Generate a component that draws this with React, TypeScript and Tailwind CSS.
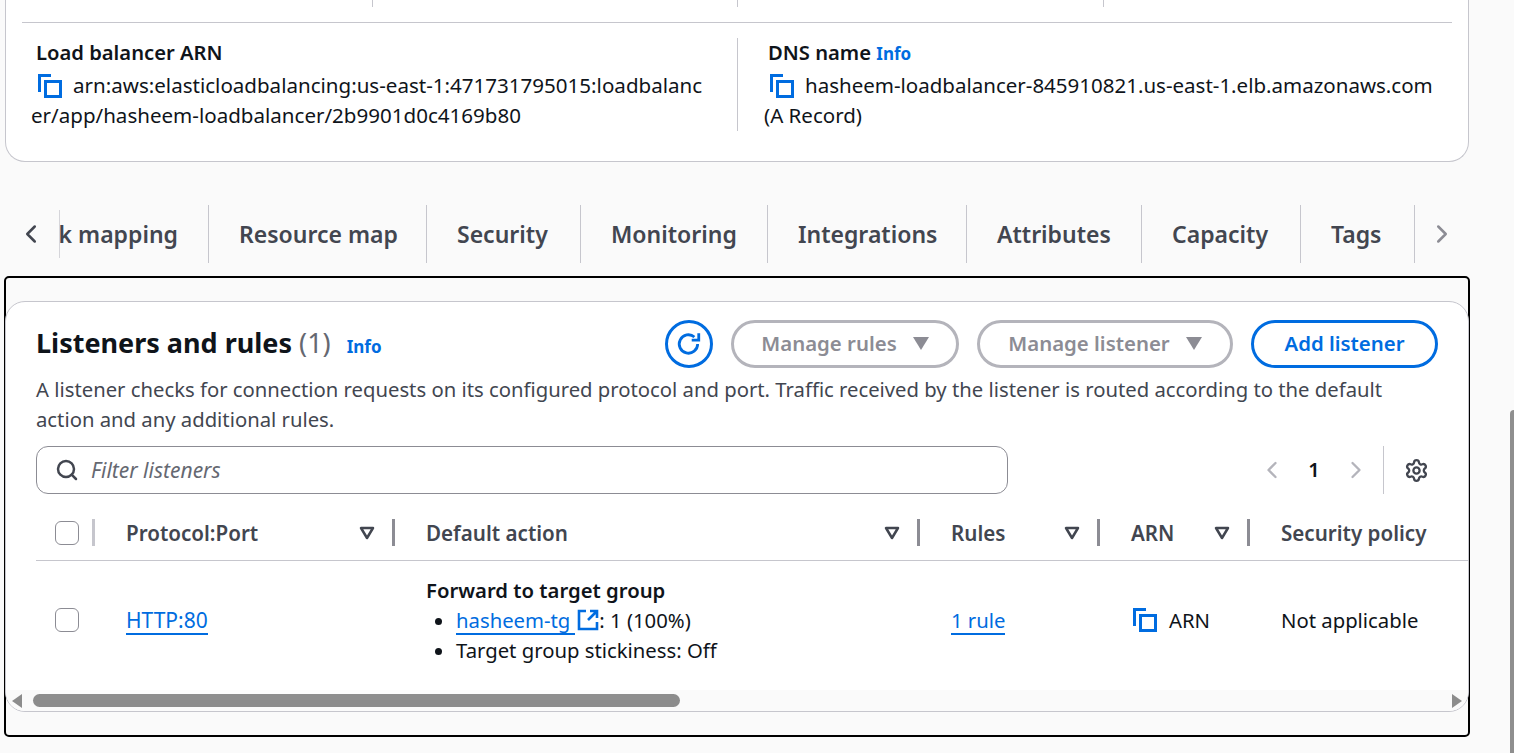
import { ChevronLeft, ChevronRight, Search, Settings } from 'lucide-react';

function CopyIcon() {
  return (
    <svg width="24" height="24" viewBox="0 0 24 24" fill="none" className="shrink-0">
      <path d="M13 1.5H1.5V18" stroke="#006ce0" strokeWidth="3" />
      <rect x="7.5" y="7.5" width="15" height="15" stroke="#006ce0" strokeWidth="3" />
    </svg>
  );
}

function SortIcon() {
  return (
    <svg width="16" height="14" viewBox="0 0 16 14" fill="none">
      <path d="M2 2h12l-6 10z" stroke="#424650" strokeWidth="2.5" strokeLinejoin="round" />
    </svg>
  );
}

function Caret({ fill }: { fill: string }) {
  return (
    <svg width="16" height="13" viewBox="0 0 16 13">
      <path d="M0 0h16l-8 13z" fill={fill} />
    </svg>
  );
}

const tabs = [
  { label: 'Resource map', w: 'w-[218px]' },
  { label: 'Security', w: 'w-[154px]' },
  { label: 'Monitoring', w: 'w-[187px]' },
  { label: 'Integrations', w: 'w-[199px]' },
  { label: 'Attributes', w: 'w-[175px]' },
  { label: 'Capacity', w: 'w-[159px]' },
  { label: 'Tags', w: 'w-[114px]' },
];

function HeaderCell({ label, sort = true, sep = 'bg-[#8c8c94]' }: { label: string; sort?: boolean; sep?: string }) {
  return (
    <div className="flex items-center h-[27px] pl-[31px] pr-[20px] justify-between relative">
      <span className="font-semibold text-[20.6px] text-[#424650] whitespace-nowrap">{label}</span>
      {sort && <SortIcon />}
      {sort && <div className={`absolute right-0 top-0 w-[3px] h-[27px] ${sep}`} />}
    </div>
  );
}

export default function App() {
  return (
    <div className="min-h-[753px] h-[753px] overflow-hidden bg-[#fafafa] text-[20px] leading-[30px] text-[#0f141a] font-['Noto_Sans',sans-serif] relative">
      {/* page scrollbar */}
      <div className="absolute right-0 top-[410px] w-[4px] h-[343px] bg-[#8f8f8f] rounded-tl" />

      {/* summary card */}
      <div className="ml-[5px] w-[1464px] h-[162px] bg-white border border-t-0 border-[#c6c6cd] rounded-b-[20px] px-[16px]">
        <div className="h-[23px] border-b border-[#c6c6cd] flex">
          <div className="w-[351px] h-[7px] border-r border-[#c6c6cd]" />
          <div className="w-[365px] h-[7px] border-r border-[#c6c6cd]" />
          <div className="w-[366px] h-[7px] border-r border-[#c6c6cd]" />
        </div>
        <div className="flex mt-[15px]">
          <div className="w-[716px] h-[93px] border-r border-[#c6c6cd] pl-[14px]">
            <div className="font-semibold h-[33px] -mt-px text-[20.2px]">Load balancer ARN</div>
            <div className="-ml-[4px] text-[20.55px]">
              <span className="inline-flex align-[-5px] ml-[6px] mr-[11px]"><CopyIcon /></span>
              arn:aws:elasticloadbalancing:us-east-1:471731795015:loadbalanc
              <br />
              <span className="-ml-[1px] block">er/app/hasheem-loadbalancer/2b9901d0c4169b80</span>
            </div>
          </div>
          <div className="pl-[30px]">
            <div className="font-semibold h-[33px] -mt-px text-[20.2px]">
              DNS name <span className="text-[17px] font-bold text-[#006ce0]">Info</span>
            </div>
            <div className="-ml-[4px] text-[20.5px]">
              <span className="inline-flex align-[-5px] ml-[6px] mr-[11px]"><CopyIcon /></span>
              hasheem-loadbalancer-845910821.us-east-1.elb.amazonaws.com
              <br />
              (A Record)
            </div>
          </div>
        </div>
      </div>

      {/* tabs */}
      <div className="mt-[43px] h-[58px] flex items-center ml-[16px] text-[23px] font-semibold text-[#424650]">
        <div className="w-[44px] h-[48px] flex items-center border-r border-[#d5d5da] bg-[#fafafa]">
          <ChevronLeft size={30} strokeWidth={2} className="text-[#424650]" />
        </div>
        <div className="w-[149px] h-[58px] overflow-hidden flex justify-end items-center border-r border-[#c6c6cd] pr-[30px]">
          <span className="whitespace-nowrap">Network mapping</span>
        </div>
        {tabs.map((t) => (
          <div key={t.label} className={`${t.w} h-[58px] shrink-0 flex items-center pl-[30px] border-r border-[#c6c6cd] whitespace-nowrap`}>
            {t.label}
          </div>
        ))}
        <ChevronRight size={30} strokeWidth={2} className="ml-[12px] text-[#8c8c94]" />
      </div>

      {/* selected frame */}
      <div className="mt-[13px] ml-[4px] w-[1466px] h-[461px] border-2 border-black rounded-[5px] pt-[23px]">
        <div className="-mx-px h-[411px] bg-white border border-[#c6c6cd] rounded-[20px] overflow-hidden flex flex-col">
          <div className="pl-[30px] pr-[30px] pt-[18px]">
            <div className="flex items-center h-[48px]">
              <h2 className="text-[27px] font-bold leading-[48px] mb-[2px]">
                Listeners and rules <span className="font-normal text-[#656871]">(1)</span>
              </h2>
              <span className="ml-[16px] mt-[6px] text-[17px] font-bold text-[#006ce0]">Info</span>
              <div className="ml-auto flex items-center gap-[18px] text-[20.4px]">
                <div className="w-[48px] h-[48px] rounded-full border-[3px] border-[#006ce0] flex items-center justify-center">
                  <svg width="26" height="26" viewBox="0 0 24 24" fill="none" stroke="#006ce0" strokeWidth="2.6">
                    <path d="M20 12a8.5 8.5 0 1 1-3-6.5" />
                    <path d="M21 2v6.5h-6.5" />
                  </svg>
                </div>
                <div className="w-[228px] h-[48px] rounded-[24px] border-[3px] border-[#b4b4bb] flex items-center justify-center gap-[16px] pb-[2px] font-semibold text-[#8c8c94]">
                  Manage rules <Caret fill="#8c8c94" />
                </div>
                <div className="w-[256px] h-[48px] rounded-[24px] border-[3px] border-[#b4b4bb] flex items-center justify-center gap-[16px] pb-[2px] font-semibold text-[#8c8c94]">
                  Manage listener <Caret fill="#8c8c94" />
                </div>
                <div className="w-[187px] h-[48px] rounded-[24px] border-[3px] border-[#006ce0] flex items-center justify-center pb-[2px] font-semibold text-[#006ce0]">
                  Add listener
                </div>
              </div>
            </div>
            <p className="mt-[6px] text-[20.27px] text-[#424650] w-[1380px]">
              A listener checks for connection requests on its configured protocol and port. Traffic received by the listener is routed according to the default action and any additional rules.
            </p>
            <div className="mt-[12px] flex items-center h-[48px]">
              <div className="w-[972px] h-[48px] rounded-[12px] border border-[#8c8c94] flex items-center pl-[18px] gap-[12px]">
                <Search size={24} strokeWidth={2.5} className="text-[#424650]" />
                <span className="italic text-[21px] text-[#656871]">Filter listeners</span>
              </div>
              <div className="flex items-center ml-[250px]">
                <ChevronLeft size={28} strokeWidth={2} className="text-[#b4b4bb]" />
                <span className="w-[56px] text-center font-semibold">1</span>
                <ChevronRight size={28} strokeWidth={2} className="text-[#b4b4bb]" />
              </div>
              <div className="ml-[13px] w-px h-[48px] bg-[#c6c6cd]" />
              <Settings size={25} strokeWidth={2.2} className="ml-[20px] text-[#424650]" />
            </div>
          </div>

          {/* table */}
          <div className="ml-[30px] mt-[11px] flex-1 flex flex-col text-[20.3px]">
            <div className="grid grid-cols-[59px_300px_525px_180px_150px_1fr] items-center h-[56px] border-b border-[#c6c6cd]">
              <div className="flex items-center h-[27px] relative">
                <div className="ml-[19px] w-[24px] h-[24px] border border-[#8c8c94] rounded-[6px] bg-white" />
                <div className="absolute right-0 top-0 w-[3px] h-[27px] bg-[#c6c6cd]" />
              </div>
              <HeaderCell label="Protocol:Port" />
              <HeaderCell label="Default action" />
              <HeaderCell label="Rules" />
              <HeaderCell label="ARN" />
              <HeaderCell label="Security policy" sort={false} />
            </div>
            <div className="grid grid-cols-[59px_300px_525px_180px_150px_1fr] items-center h-[129px] pb-[12px]">
              <div className="ml-[19px] w-[24px] h-[24px] border border-[#8c8c94] rounded-[6px] bg-white" />
              <div className="pl-[31px]">
                <span className="text-[#006ce0] text-[21px] border-b-2 border-[#006ce0] leading-[26px] inline-block">HTTP:80</span>
              </div>
              <div className="pl-[31px]">
                <div className="font-semibold">Forward to target group</div>
                <ul className="list-disc pl-[30px]">
                  <li>
                    <span className="text-[#006ce0] border-b-2 border-[#006ce0] leading-[26px] inline-block pr-[5px]">hasheem-tg</span>
                    <svg width="22" height="22" viewBox="0 0 22 22" fill="none" stroke="#006ce0" strokeWidth="2.6" className="inline align-[-3px] ml-[2px]">
                      <path d="M9 2H2v18h18v-7" />
                      <path d="M13 2h7v7M20 2l-9 9" />
                    </svg>
                    : 1 (100%)
                  </li>
                  <li>Target group stickiness: Off</li>
                </ul>
              </div>
              <div className="pl-[31px]">
                <span className="text-[#006ce0] border-b-2 border-[#006ce0] leading-[26px] inline-block">1 rule</span>
              </div>
              <div className="pl-[33px] flex items-center gap-[12px]">
                <CopyIcon /> ARN
              </div>
              <div className="pl-[31px] whitespace-nowrap">Not applicable</div>
            </div>
          </div>

          {/* horizontal scrollbar */}
          <div className="h-[21px] bg-[#fafafa] flex items-center pl-[6px] pr-[6px] shrink-0">
            <div className="w-0 h-0 border-y-[7px] border-y-transparent border-r-[10px] border-r-[#8c8c8c]" />
            <div className="ml-[11px] w-[647px] h-[13px] rounded-full bg-[#8c8c8c]" />
            <div className="ml-auto w-0 h-0 border-y-[7px] border-y-transparent border-l-[10px] border-l-[#8c8c8c]" />
          </div>
        </div>
      </div>
    </div>
  );
}
